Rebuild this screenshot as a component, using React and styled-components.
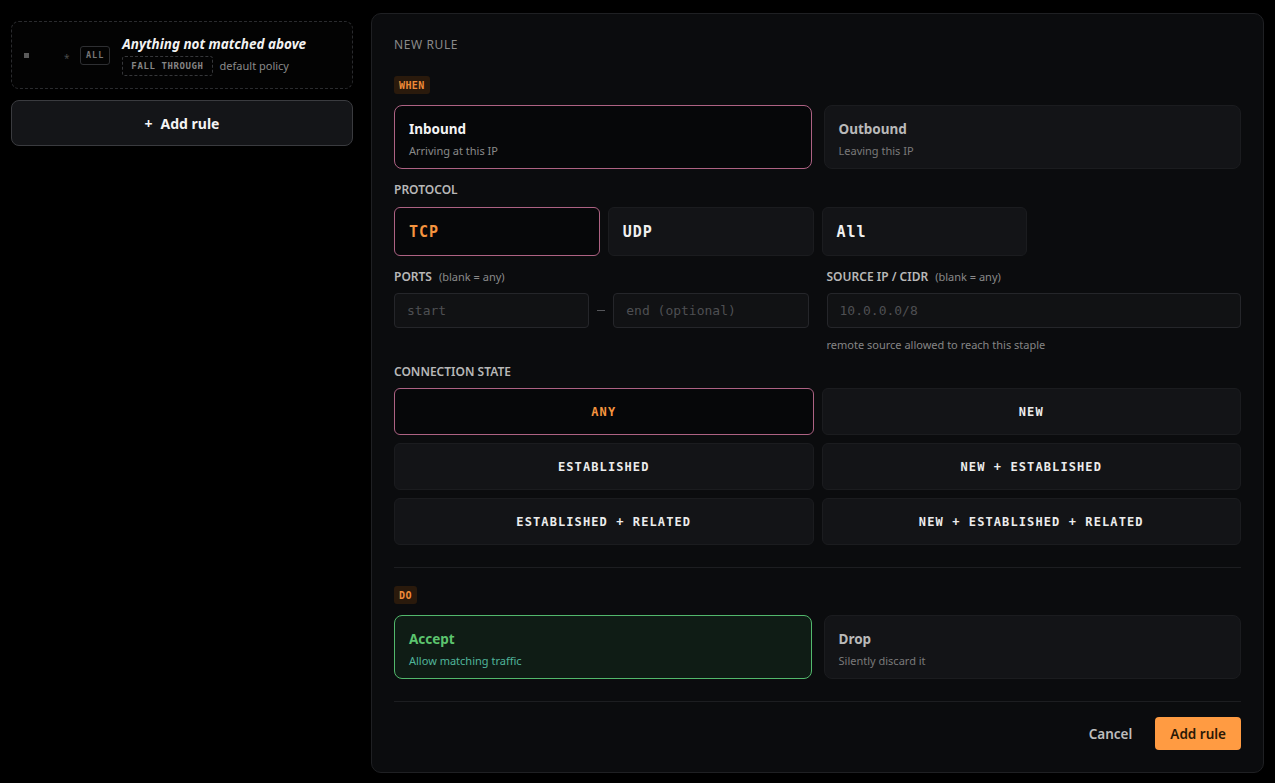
import React, {useState} from 'react';
import styled, {createGlobalStyle} from 'styled-components'

const GlobalStyle = createGlobalStyle`
  html, body {
    margin: 0;
    padding: 0;
    background: #000;
    font-family: "Noto Sans", "Open Sans", sans-serif;
    color: #e6e6e6;
  }
  * { box-sizing: border-box; }
`

const MONO = `"DejaVu Sans Mono", "Liberation Mono", monospace`

const Page = styled.div`
  display: flex;
  align-items: flex-start;
  gap: 18px;
  padding: 13px 11px 10px 11px;
  height: 783px;
`

const Sidebar = styled.div`
  width: 342px;
  padding-top: 8px;
  display: flex;
  flex-direction: column;
  gap: 11px;
`

const FallCard = styled.div`
  height: 68px;
  border: 1px dashed #2a2b2e;
  border-radius: 8px;
  background: #030303;
  display: flex;
  align-items: center;
  padding: 0 12px;
`

const Handle = styled.span`
  width: 40px;
  display: flex;
  align-items: center;
  &::before {
    content: '';
    width: 5px;
    height: 5px;
    background: #5a5a5a;
  }
`

const Star = styled.span`
  width: 16px;
  color: #4a4a4a;
  font-size: 10px;
  margin-top: 6px;
`

const ProtoTag = styled.span`
  font-family: ${MONO};
  font-size: 8.5px;
  font-weight: bold;
  letter-spacing: 1px;
  color: #777;
  border: 1px solid #2e2f32;
  border-radius: 3px;
  padding: 0 5px;
  height: 19px;
  display: inline-flex;
  align-items: center;
  margin-right: 12px;
`

const FallText = styled.div`
  display: flex;
  flex-direction: column;
  gap: 3px;
`

const FallTitle = styled.div`
  font-size: 13.5px;
  font-weight: 700;
  font-style: italic;
  color: #f2f2f2;
  line-height: 18px;
`

const FallMeta = styled.div`
  display: flex;
  align-items: center;
  gap: 7px;
  font-size: 11px;
  color: #8a8a8a;
`

const DashedTag = styled.span`
  font-family: ${MONO};
  font-size: 9px;
  font-weight: bold;
  letter-spacing: 0.6px;
  color: #858585;
  border: 1px dashed #36373a;
  border-radius: 3px;
  height: 20px;
  padding: 0 8px;
  display: inline-flex;
  align-items: center;
`

const AddRuleWide = styled.button`
  height: 46px;
  border: 1px solid #3a3b3f;
  border-radius: 8px;
  background: #141518;
  color: #f4f4f4;
  font-family: inherit;
  font-size: 14px;
  font-weight: 700;
  cursor: pointer;
`

const Plus = styled.span`
  margin-right: 8px;
`

const Panel = styled.div`
  width: 893px;
  height: 760px;
  background: #0b0c0e;
  border: 1px solid #1f2023;
  border-radius: 10px;
  padding: 23px 22px 22px 22px;
  display: flex;
  flex-direction: column;
`

const PanelTitle = styled.div`
  font-size: 12px;
  line-height: 16px;
  letter-spacing: 0.6px;
  color: #8a8a8a;
`

const StepBadge = styled.span`
  align-self: flex-start;
  margin-top: ${p => p.$mt}px;
  font-family: ${MONO};
  font-size: 10px;
  font-weight: bold;
  letter-spacing: 0.4px;
  color: #f08a38;
  background: #2a1a0c;
  border-radius: 3px;
  height: 18px;
  padding: 0 5px;
  display: inline-flex;
  align-items: center;
`

const TwoCards = styled.div`
  display: grid;
  grid-template-columns: 1fr 1fr;
  gap: 12px;
  margin-top: 11px;
`

const ChoiceCard = styled.div`
  height: 64px;
  border-radius: 8px;
  padding: 14px 14px 0;
  border: 1px solid ${p => p.$on ? (p.$tone === 'green' ? '#52b86c' : '#ad6283') : '#1b1c1f'};
  background: ${p => p.$on ? (p.$tone === 'green' ? '#0f1c15' : '#060709') : '#131417'};
  cursor: pointer;
`

const ChoiceTitle = styled.div`
  font-size: 13.5px;
  font-weight: 700;
  line-height: 18px;
  color: ${p => p.$on ? (p.$tone === 'green' ? '#5cc46e' : '#f4f4f4') : '#b9b9b9'};
`

const ChoiceSub = styled.div`
  margin-top: 6px;
  font-size: 11px;
  line-height: 14px;
  color: ${p => p.$on ? (p.$tone === 'green' ? '#4fb49a' : '#8a8a8a') : '#7a7a7a'};
`

const FieldLabel = styled.div`
  margin-top: ${p => p.$mt}px;
  font-size: 12px;
  line-height: 16px;
  font-weight: 600;
  color: #b8b8b8;
  span {
    font-weight: 400;
    font-size: 11px;
    color: #8a8a8a;
    margin-left: 7px;
  }
`

const ProtoGrid = styled.div`
  display: grid;
  grid-template-columns: repeat(4, 1fr);
  gap: 8px;
  margin-top: 9px;
`

const ProtoButton = styled.button`
  height: 49px;
  border-radius: 6px;
  border: 1px solid ${p => p.$on ? '#ad6283' : '#1b1c1f'};
  background: ${p => p.$on ? '#060709' : '#131417'};
  color: ${p => p.$on ? '#f5943f' : '#f0f0f0'};
  font-family: ${MONO};
  font-size: 15px;
  font-weight: bold;
  letter-spacing: 1px;
  text-align: left;
  padding: 0 14px;
  cursor: pointer;
`

const FieldsRow = styled.div`
  display: grid;
  grid-template-columns: 1fr 1fr;
  gap: 18px;
  margin-top: 13px;
`

const Field = styled.div`
  display: flex;
  flex-direction: column;
`

const InputRow = styled.div`
  display: flex;
  align-items: center;
  margin-top: 8px;
`

const Input = styled.input`
  flex: 1;
  min-width: 0;
  height: 35px;
  background: #111214;
  border: 1px solid #25262a;
  border-radius: 4px;
  padding: 0 12px;
  font-family: ${MONO};
  font-size: 13px;
  color: #ddd;
  outline: none;
  &::placeholder { color: #4e4f52; }
`

const Dash = styled.span`
  width: 24px;
  display: flex;
  justify-content: center;
  &::before {
    content: '';
    width: 8px;
    height: 1px;
    background: #55565a;
  }
`

const Helper = styled.div`
  margin-top: 10px;
  font-size: 11px;
  line-height: 14px;
  color: #858585;
`

const StateGrid = styled.div`
  display: grid;
  grid-template-columns: 1fr 1fr;
  gap: 8px;
  margin-top: 8px;
`

const StateButton = styled.button`
  height: 47px;
  border-radius: 6px;
  border: 1px solid ${p => p.$on ? '#ad6283' : '#1b1c1f'};
  background: ${p => p.$on ? '#060709' : '#131417'};
  color: ${p => p.$on ? '#f5943f' : '#ececec'};
  font-family: ${MONO};
  font-size: 12px;
  font-weight: bold;
  letter-spacing: 1.1px;
  cursor: pointer;
`

const Divider = styled.div`
  height: 1px;
  background: #1d1e21;
  margin-top: ${p => p.$mt}px;
`

const Footer = styled.div`
  display: flex;
  justify-content: flex-end;
  align-items: center;
  gap: 23px;
  margin-top: 15px;
`

const GhostButton = styled.button`
  background: none;
  border: none;
  padding: 0;
  font-family: inherit;
  font-size: 13.5px;
  font-weight: 600;
  color: #bdbdbd;
  cursor: pointer;
`

const PrimaryButton = styled.button`
  height: 33px;
  padding: 0 15px;
  border: none;
  border-radius: 4px;
  background: #ff9b42;
  color: #2a1806;
  font-family: inherit;
  font-size: 13.5px;
  font-weight: 600;
  cursor: pointer;
`

const states = ['ANY', 'NEW', 'ESTABLISHED', 'NEW + ESTABLISHED', 'ESTABLISHED + RELATED', 'NEW + ESTABLISHED + RELATED']

const App = () => {
    const [direction, setDirection] = useState('in')
    const [proto, setProto] = useState('TCP')
    const [state, setState] = useState('ANY')
    const [action, setAction] = useState('accept')

    return (
        <>
            <GlobalStyle/>
            <Page>
                <Sidebar>
                    <FallCard>
                        <Handle/>
                        <Star>*</Star>
                        <ProtoTag>ALL</ProtoTag>
                        <FallText>
                            <FallTitle>Anything not matched above</FallTitle>
                            <FallMeta>
                                <DashedTag>FALL THROUGH</DashedTag>
                                default policy
                            </FallMeta>
                        </FallText>
                    </FallCard>
                    <AddRuleWide><Plus>+</Plus>Add rule</AddRuleWide>
                </Sidebar>

                <Panel>
                    <PanelTitle>NEW RULE</PanelTitle>

                    <StepBadge $mt={23}>WHEN</StepBadge>
                    <TwoCards>
                        <ChoiceCard $on={direction === 'in'} onClick={() => setDirection('in')}>
                            <ChoiceTitle $on={direction === 'in'}>Inbound</ChoiceTitle>
                            <ChoiceSub $on={direction === 'in'}>Arriving at this IP</ChoiceSub>
                        </ChoiceCard>
                        <ChoiceCard $on={direction === 'out'} onClick={() => setDirection('out')}>
                            <ChoiceTitle $on={direction === 'out'}>Outbound</ChoiceTitle>
                            <ChoiceSub $on={direction === 'out'}>Leaving this IP</ChoiceSub>
                        </ChoiceCard>
                    </TwoCards>

                    <FieldLabel $mt={13}>PROTOCOL</FieldLabel>
                    <ProtoGrid>
                        {['TCP', 'UDP', 'All'].map(p => (
                            <ProtoButton key={p} $on={proto === p} onClick={() => setProto(p)}>{p}</ProtoButton>
                        ))}
                    </ProtoGrid>

                    <FieldsRow>
                        <Field>
                            <FieldLabel $mt={0}>PORTS<span>(blank = any)</span></FieldLabel>
                            <InputRow>
                                <Input placeholder={'start'}/>
                                <Dash/>
                                <Input placeholder={'end (optional)'}/>
                            </InputRow>
                        </Field>
                        <Field>
                            <FieldLabel $mt={0}>SOURCE IP / CIDR<span>(blank = any)</span></FieldLabel>
                            <InputRow>
                                <Input placeholder={'10.0.0.0/8'}/>
                            </InputRow>
                            <Helper>remote source allowed to reach this staple</Helper>
                        </Field>
                    </FieldsRow>

                    <FieldLabel $mt={12}>CONNECTION STATE</FieldLabel>
                    <StateGrid>
                        {states.map(s => (
                            <StateButton key={s} $on={state === s} onClick={() => setState(s)}>{s}</StateButton>
                        ))}
                    </StateGrid>

                    <Divider $mt={22}/>

                    <StepBadge $mt={18}>DO</StepBadge>
                    <TwoCards>
                        <ChoiceCard $tone={'green'} $on={action === 'accept'} onClick={() => setAction('accept')}>
                            <ChoiceTitle $tone={'green'} $on={action === 'accept'}>Accept</ChoiceTitle>
                            <ChoiceSub $tone={'green'} $on={action === 'accept'}>Allow matching traffic</ChoiceSub>
                        </ChoiceCard>
                        <ChoiceCard $tone={'green'} $on={action === 'drop'} onClick={() => setAction('drop')}>
                            <ChoiceTitle $tone={'green'} $on={action === 'drop'}>Drop</ChoiceTitle>
                            <ChoiceSub $tone={'green'} $on={action === 'drop'}>Silently discard it</ChoiceSub>
                        </ChoiceCard>
                    </TwoCards>

                    <Divider $mt={22}/>

                    <Footer>
                        <GhostButton>Cancel</GhostButton>
                        <PrimaryButton>Add rule</PrimaryButton>
                    </Footer>
                </Panel>
            </Page>
        </>
    )
}

export default App;
